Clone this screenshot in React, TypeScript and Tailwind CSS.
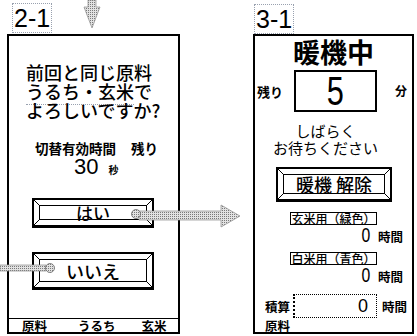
import React from "react";

const jp = "font-['Noto_Sans_CJK_JP','Noto_Sans_CJK_SC',sans-serif]";
const num = "font-['Liberation_Sans',Arial,sans-serif]";

function Corners() {
  // diagonal seams of the bevelled key
  return (
    <>
      <svg className="absolute left-0 top-0" width="6" height="6" aria-hidden="true">
        <line x1="0" y1="0" x2="6" y2="6" stroke="black" strokeWidth="1" />
      </svg>
      <svg className="absolute right-0 top-0" width="6" height="6" aria-hidden="true">
        <line x1="6" y1="0" x2="0" y2="6" stroke="black" strokeWidth="1" />
      </svg>
      <svg className="absolute bottom-0 left-0" width="6" height="6" aria-hidden="true">
        <line x1="0" y1="6" x2="6" y2="0" stroke="black" strokeWidth="1" />
      </svg>
      <svg className="absolute bottom-0 right-0" width="6" height="6" aria-hidden="true">
        <line x1="6" y1="6" x2="0" y2="0" stroke="black" strokeWidth="1" />
      </svg>
    </>
  );
}

function BevelKey({ className, textClass, label }: { className: string; textClass: string; label: string }) {
  return (
    <div className={`relative flex border-2 border-b-[3px] border-black p-[5px] ${className}`}>
      <Corners />
      <div className="flex flex-1 items-center justify-center border border-black">
        <span className={`${jp} ${textClass}`}>{label}</span>
      </div>
    </div>
  );
}

function Arrows() {
  return (
    <svg className="pointer-events-none absolute inset-0" width="417" height="336" aria-hidden="true">
      <defs>
        <pattern id="dots" width="2" height="2" patternUnits="userSpaceOnUse">
          <rect width="2" height="2" fill="#e2e2e2" />
          <rect width="1" height="1" fill="#7a7a7a" />
        </pattern>
      </defs>
      {/* down arrow over 2-1 */}
      <path d="M88 0 H96 V7 H100 L92 28 L84 7 H88 Z" fill="url(#dots)" stroke="#8a8a8a" strokeWidth="0.7" />
      {/* はい -> 3-1 */}
      <path d="M139 211 H221 V205 L240 216 L221 227 V220 H139 Z" fill="url(#dots)" stroke="#8a8a8a" strokeWidth="0.7" />
      <circle cx="136" cy="214" r="4.5" fill="url(#dots)" stroke="#6a6a6a" strokeWidth="0.8" />
      {/* from the left into いいえ */}
      <path d="M0 265 H46 V271 H0 Z" fill="url(#dots)" stroke="#8a8a8a" strokeWidth="0.7" />
      <circle cx="50" cy="268" r="4.5" fill="url(#dots)" stroke="#6a6a6a" strokeWidth="0.8" />
    </svg>
  );
}

export default function App() {
  return (
    <div className="relative h-[336px] w-[417px] overflow-hidden bg-white text-black">
      <div className="flex gap-[73px] pl-[7px]">
        {/* 2-1 */}
        <div className="flex w-[173px] flex-col">
          <div className="h-[34px] pl-[5px] pt-[5px]">
            <span className={`${num} border border-dotted border-gray-400 px-[1px] text-[25px] leading-[26px]`}>2-1</span>
          </div>
          <div className="flex h-[300px] flex-col border-2 border-black">
            <div className={`${jp} mt-[27px] pl-[17px] text-[18px] font-medium leading-[19px]`}>
              <div>前回と同じ原料</div>
              <div>
                <span className="border-b border-dotted border-gray-400">うるち・玄米</span>で
              </div>
              <div>よろしいですか?</div>
            </div>
            <div className={`${jp} mt-[21px] flex pl-[26px] text-[13.5px] font-bold leading-[14px]`}>
              <span>切替有効時間</span>
              <span className="ml-[15px]">残り</span>
            </div>
            <div className="flex h-[24px] items-baseline pl-[65px]">
              <span className={`${num} text-[22px] leading-[24px]`}>30</span>
              <span className={`${jp} ml-[10px] text-[10px] font-bold leading-[10px]`}>秒</span>
            </div>
            <BevelKey className="ml-[23px] mt-[19px] h-[30px] w-[122px]" textClass="text-[17px] font-medium leading-[17px]" label="はい" />
            <BevelKey className="ml-[23px] mt-[24px] h-[38px] w-[122px]" textClass="text-[18px] font-medium leading-[18px]" label="いいえ" />
            <div className="flex-1" />
            <div className={`${jp} flex h-[14px] items-center border-t border-black text-[12.5px] font-bold leading-[13px]`}>
              <span className="ml-[13px]">原料</span>
              <span className="ml-[31px]">うるち</span>
              <span className="ml-[26px]">玄米</span>
            </div>
          </div>
        </div>

        {/* 3-1 */}
        <div className="flex w-[161px] flex-col">
          <div className="h-[34px] pl-[1px] pt-[6px]">
            <span className={`${num} border border-dotted border-gray-400 px-[1px] text-[25px] leading-[26px]`}>3-1</span>
          </div>
          <div className="flex h-[300px] flex-col border-2 border-black">
            <div className={`${jp} mt-[1px] h-[29px] text-center text-[27px] font-bold leading-[29px]`}>暖機中</div>
            <div className="mt-[4px] flex h-[42px] items-center pl-[2px]">
              <span className={`${jp} text-[13px] font-bold leading-[13px]`}>残り</span>
              <div className="ml-[11px] flex h-[42px] w-[83px] items-center justify-center border-2 border-black">
                <span className={`${num} inline-block scale-x-75 text-[41px] leading-[40px]`}>5</span>
              </div>
              <span className={`${jp} ml-[18px] text-[12px] font-bold leading-[12px]`}>分</span>
            </div>
            <div className={`${jp} mt-[10px] pr-[16px] text-center text-[15px] leading-[17px]`}>
              <div>しばらく</div>
              <div>お待ちください</div>
            </div>
            <BevelKey className="ml-[21px] mt-[11px] h-[35px] w-[116px]" textClass="text-[18px] font-medium leading-[18px]" label="暖機 解除" />
            <div className={`${jp} ml-[35px] mt-[10px] flex h-[13px] w-[87px] items-center justify-center border border-black text-[12px] font-medium leading-[11px]`}>
              玄米用（緑色）
            </div>
            <div className="flex h-[20px] items-baseline justify-end pr-[9px]">
              <span className={`${num} inline-block scale-x-75 text-[21px] leading-[20px]`}>0</span>
              <span className={`${jp} ml-[6px] text-[12.5px] font-bold leading-[13px]`}>時間</span>
            </div>
            <div className={`${jp} ml-[35px] mt-[7px] flex h-[13px] w-[87px] items-center justify-center border border-black text-[12px] font-medium leading-[11px]`}>
              白米用（青色）
            </div>
            <div className="flex h-[20px] items-baseline justify-end pr-[9px]">
              <span className={`${num} inline-block scale-x-75 text-[21px] leading-[20px]`}>0</span>
              <span className={`${jp} ml-[6px] text-[12.5px] font-bold leading-[13px]`}>時間</span>
            </div>
            <div className="mt-[9px] flex h-[24px] items-center pl-[10px]">
              <span className={`${jp} text-[12.5px] font-bold leading-[13px]`}>積算</span>
              <div className="ml-[3px] flex h-[24px] w-[84px] items-center justify-end border border-l-2 border-dotted border-black pr-[8px]">
                <span className={`${num} text-[18px] leading-[18px]`}>0</span>
              </div>
              <span className={`${jp} ml-[5px] text-[12.5px] font-bold leading-[13px]`}>時間</span>
            </div>
            <div className={`${jp} mt-[1px] pl-[10px] text-[12.5px] font-bold leading-[13px]`}>原料</div>
          </div>
        </div>
      </div>
      <Arrows />
    </div>
  );
}
